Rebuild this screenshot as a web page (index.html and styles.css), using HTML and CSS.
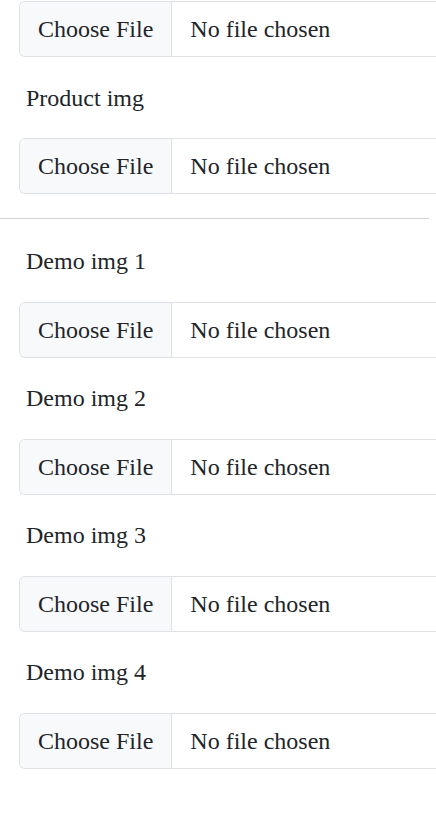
FILE: index.html
```html
<!DOCTYPE html>
<html lang="en">
<head>
<meta charset="utf-8">
<title>Upload images</title>
<link rel="stylesheet" href="styles.css">
</head>
<body>
<div class="page">
  <div class="file"><span class="file-btn">Choose File</span><span class="file-name">No file chosen</span></div>
  <label class="lbl lbl-first">Product img</label>
  <div class="file"><span class="file-btn">Choose File</span><span class="file-name">No file chosen</span></div>
  <hr class="sep">
  <label class="lbl lbl-after-hr">Demo img 1</label>
  <div class="file"><span class="file-btn">Choose File</span><span class="file-name">No file chosen</span></div>
  <label class="lbl">Demo img 2</label>
  <div class="file"><span class="file-btn">Choose File</span><span class="file-name">No file chosen</span></div>
  <label class="lbl">Demo img 3</label>
  <div class="file"><span class="file-btn">Choose File</span><span class="file-name">No file chosen</span></div>
  <label class="lbl">Demo img 4</label>
  <div class="file"><span class="file-btn">Choose File</span><span class="file-name">No file chosen</span></div>
</div>
</body>
</html>
```

FILE: styles.css
```css
html, body {
  margin: 0;
  padding: 0;
  overflow: hidden;
  background: #ffffff;
}

.page {
  padding-top: 1px;
  font-family: "Liberation Serif", "Times New Roman", serif;
  font-size: 24px;
  line-height: 36px;
  color: #212529;
  width: 436px;
}

.file {
  display: flex;
  box-sizing: border-box;
  height: 56px;
  width: 417px;
  margin-left: 19px;
  border: 1px solid #dee2e6;
  border-right: 0;
  border-radius: 6px 0 0 6px;
  overflow: hidden;
  background: #ffffff;
}

.file-btn {
  padding: 9px 18px;
  background: #f8f9fa;
  border-right: 1px solid #dee2e6;
  white-space: nowrap;
}

.file-name {
  padding: 9px 18px;
  white-space: nowrap;
}

.lbl {
  display: block;
  margin: 22px 0 23px 26px;
}

.lbl-first {
  margin-top: 23px;
  margin-bottom: 22px;
}

.lbl-after-hr {
  margin-top: 0;
}

.sep {
  border: 0;
  border-top: 1px solid #cfd0d1;
  margin: 24px 0;
  width: 429px;
  height: 0;
}
```
